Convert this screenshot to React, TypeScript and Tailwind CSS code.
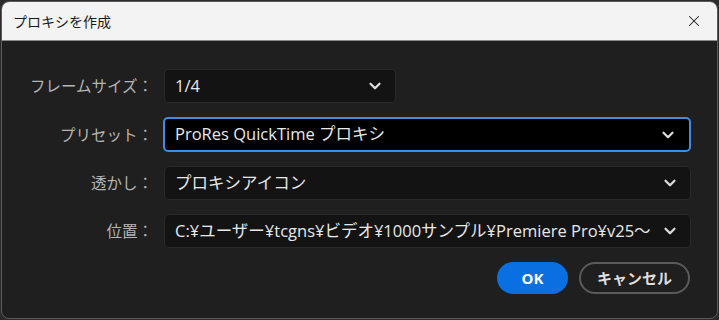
import { ChevronDown, X } from "lucide-react";

const font = { fontFamily: '"Open Sans", "Noto Sans CJK JP", sans-serif' };
const jp = { fontFamily: '"Noto Sans CJK JP", sans-serif' };

type FieldRowProps = {
    label: string;
    value: string;
    focused?: boolean;
    narrow?: boolean;
};

const FieldRow = ({ label, value, focused, narrow }: FieldRowProps) => {
    return (
        <div className="flex items-center">
            <div className="w-[151px] text-right text-[15.5px] text-[#b4b4b4]" style={jp}>
                {label}
            </div>
            <div
                className={
                    focused
                        ? "ml-[10px] flex h-[35px] w-[528px] items-center justify-between rounded-[5px] border-2 border-[#3d8de6] bg-black pl-[10px] pr-[12px]"
                        : narrow
                          ? "ml-[11px] flex h-[34px] w-[232px] items-center justify-between rounded-[5px] border border-[#2a2a2a] bg-[#131313] pl-[10px] pr-[11px]"
                          : "ml-[11px] flex h-[34px] w-[527px] items-center justify-between rounded-[5px] border border-[#2a2a2a] bg-[#131313] pl-[10px] pr-[11px]"
                }
            >
                <span className="truncate text-[16.5px] text-[#e8e8e8]">{value}</span>
                <ChevronDown className="h-[18px] w-[18px] shrink-0 text-[#dcdcdc]" strokeWidth={3} />
            </div>
        </div>
    );
};

export default function App() {
    return (
        <div className="h-[320px] w-[719px] bg-[#2b2b2b] p-[1px]" style={font}>
            <div className="flex h-[318px] w-[717px] flex-col overflow-hidden rounded-[8px] border border-[#5a5a5a] bg-[#1f1f1f]">
                <div className="flex h-[39px] items-center justify-between border-b border-[#8a8a8a] bg-[#f3f3f3] pl-[11px] pr-[14px]">
                    <span className="text-[14px] text-[#1a1a1a]" style={jp}>
                        プロキシを作成
                    </span>
                    <X className="h-[18px] w-[18px] text-[#222]" strokeWidth={1.4} />
                </div>
                <div className="flex flex-col gap-[14px] pt-[28px]">
                    <FieldRow label="フレームサイズ：" value="1/4" narrow />
                    <FieldRow label="プリセット：" value="ProRes QuickTime プロキシ" focused />
                    <FieldRow label="透かし：" value="プロキシアイコン" />
                    <FieldRow label="位置：" value="C:¥ユーザー¥tcgns¥ビデオ¥1000サンプル¥Premiere Pro¥v25～" />
                </div>
                <div className="mt-[14px] flex justify-end gap-[11px] pr-[27px]">
                    <button className="h-[32px] w-[71px] rounded-full bg-[#0a6fe0] text-[15px] font-bold text-white">
                        OK
                    </button>
                    <button
                        className="h-[32px] w-[111px] rounded-full border-2 border-[#5a5a5a] text-[15px] font-bold text-[#dedede]"
                        style={jp}
                    >
                        キャンセル
                    </button>
                </div>
            </div>
        </div>
    );
}
